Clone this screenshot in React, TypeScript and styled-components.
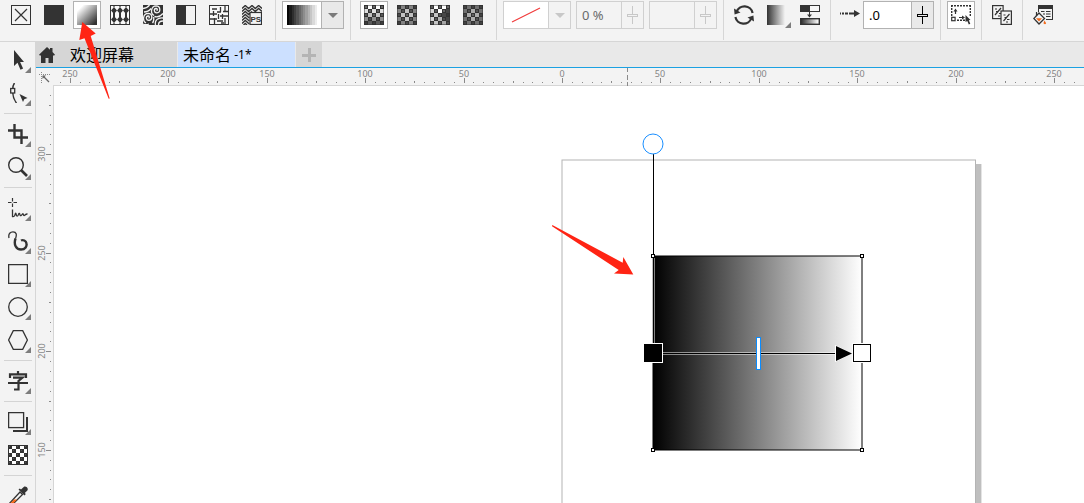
import React, { useEffect, useState } from "react";
import styled, { createGlobalStyle, css } from "styled-components";

const ink = "#333333";
const line = "#d6d6d6";
const edge = "#b2b2b2";
const uiFont = `"Noto Sans", "Noto Sans CJK SC", sans-serif`;

const Global = createGlobalStyle`
  * { box-sizing: border-box; }
  body { margin: 0; font-family: ${uiFont}; background: #f3f3f3; color: #000; }
  button, input, select { font: inherit; color: inherit; }
`;

const Shell = styled.div`
  position: relative;
  display: flex;
  flex-direction: column;
  height: 100vh;
  overflow: hidden;
  background: #f3f3f3;
`;

/* ---------- property bar ---------- */

const PropertyBar = styled.header`
  display: flex;
  flex: none;
  height: 42px;
  border-bottom: 1px solid ${line};
  overflow: hidden;
`;

const Group = styled.div<{ $start?: number; $end?: number; $gap?: number; $last?: boolean }>`
  display: flex;
  flex: none;
  align-items: flex-start;
  gap: ${(p) => p.$gap ?? 5}px;
  height: 40px;
  padding: 1px ${(p) => p.$end ?? 6}px 0 ${(p) => p.$start ?? 6}px;
  border-right: ${(p) => (p.$last ? "none" : `1px solid ${line}`)};
`;

const ToolButton = styled.button<{ $active?: boolean }>`
  position: relative;
  display: grid;
  place-items: center;
  width: 28px;
  height: 28px;
  padding: 0;
  border: 1px solid ${(p) => (p.$active ? edge : "transparent")};
  background: ${(p) => (p.$active ? "#fff" : "transparent")};
  svg { display: block; }
`;

const Field = styled.div<{ $disabled?: boolean; $white?: boolean; $wide?: boolean }>`
  display: grid;
  grid-template-columns: 1fr 22px;
  width: ${(p) => (p.$wide ? 71 : p.$white && !p.$disabled ? 62 : 68)}px;
  height: 28px;
  border: 1px solid ${(p) => (p.$disabled ? "#d0d0d0" : edge)};
  background: ${(p) => (p.$white ? "#fff" : "#f3f3f3")};
`;

const FieldSelect = styled.select`
  grid-area: 1 / 1 / 2 / 3;
  appearance: none;
  width: 100%;
  height: 100%;
  border: 0;
  background: transparent;
  z-index: 1;
`;

const FieldPreview = styled.span`
  grid-area: 1 / 1 / 2 / 2;
  display: grid;
  place-items: center;
`;

const FieldSide = styled.span<{ $disabled?: boolean }>`
  grid-area: 1 / 2 / 2 / 3;
  display: grid;
  place-items: center;
  border-left: 1px solid ${(p) => (p.$disabled ? "#d0d0d0" : edge)};
  background: ${(p) => (p.$disabled ? "#f3f3f3" : "#e9e9e9")};
`;

const StepButton = styled.button<{ $disabled?: boolean }>`
  display: grid;
  place-items: center;
  padding: 0;
  border: 0;
  border-left: 1px solid ${(p) => (p.$disabled ? "#d0d0d0" : edge)};
  background: ${(p) => (p.$disabled ? "#f3f3f3" : "#e9e9e9")};
`;

const FieldInput = styled.input`
  width: 100%;
  min-width: 0;
  padding: 0 0 0 5px;
  border: 0;
  background: transparent;
  font-size: 13px;
  line-height: 26px;
  color: #000;
  &:disabled { color: #6a6a6a; }
`;

const DirectionIcon = styled.label`
  padding-top: 4px;
  height: 28px;
`;

/* ---------- body ---------- */

const Body = styled.div`
  display: flex;
  flex: 1;
  min-height: 0;
`;

const Toolbox = styled.nav`
  flex: none;
  width: 36px;
  padding-top: 2px;
  border-right: 1px solid ${line};
  overflow: hidden;
`;

const Tool = styled.button`
  position: relative;
  display: flex;
  justify-content: center;
  align-items: flex-start;
  width: 35px;
  height: 33px;
  padding: 6px 0 0 1px;
  border: 0;
  background: transparent;
  svg { display: block; }
`;

const Flyout = styled.i<{ $bar?: boolean }>`
  position: absolute;
  right: ${(p) => (p.$bar ? -1 : 4)}px;
  bottom: ${(p) => (p.$bar ? 0 : 4)}px;
  border-left: 6px solid transparent;
  border-bottom: 6px solid #7d7d7d;
`;

const ToolRule = styled.hr`
  height: 1px;
  margin: 3px 3px 4px 4px;
  border: 0;
  background: #d4d4d4;
`;

const Workspace = styled.main`
  display: flex;
  flex-direction: column;
  flex: 1;
  min-width: 0;
`;

const Tabs = styled.div`
  display: flex;
  flex: none;
  gap: 1px;
  height: 26px;
  background: #e9e9e9;
  border-bottom: 1px solid #1ba1e2;
`;

const Tab = styled.button<{ $active?: boolean }>`
  display: flex;
  align-items: center;
  padding: 0 43px 0 3px;
  border: 0;
  background: #d6d6d6;
  font-size: 16px;
  line-height: 24px;
  color: #000;
  white-space: pre;
  svg { flex: none; margin-right: 15px; }
  ${(p) =>
    p.$active &&
    css`
      padding-left: 5px;
      background: #cce0ff;
    `}
  small { font-size: 12px; }
`;

const AddTab = styled.button`
  display: grid;
  place-items: center;
  width: 26px;
  padding: 0;
  border: 0;
  background: #d6d6d6;
`;

const RulerRow = styled.div`
  display: flex;
  flex: none;
  height: 18px;
`;

const RulerCorner = styled.div`
  display: grid;
  place-items: center;
  flex: none;
  width: 17px;
`;

const HRuler = styled.div`
  flex: 1;
  min-width: 0;
  overflow: hidden;
  svg { display: block; }
`;

const Stage = styled.div`
  display: flex;
  flex: 1;
  min-height: 0;
`;

const VRuler = styled.div`
  flex: none;
  width: 18px;
  overflow: hidden;
  border-right: 1px solid ${line};
  svg { display: block; }
`;

const Canvas = styled.div`
  flex: 1;
  min-width: 0;
  overflow: hidden;
  background: #fff;
  svg { display: block; }
`;

const Annotations = styled.svg`
  position: absolute;
  inset: 0;
  pointer-events: none;
`;

/* ---------- icon helpers ---------- */

const Icon = ({ children, crisp }: { children: React.ReactNode; crisp?: boolean }) => (
  <svg
    width="20"
    height="20"
    viewBox="0 0 20 20"
    fill="none"
    stroke="none"
    shapeRendering={crisp ? "crispEdges" : undefined}
    aria-hidden="true"
  >
    {children}
  </svg>
);

const Frame = ({ fill = "none" }: { fill?: string }) => (
  <rect x="0.5" y="0.5" width="19" height="19" fill={fill} stroke={ink} />
);

const Checker = ({ shade }: { shade: (c: number, r: number) => number }) => (
  <Icon crisp>
    <rect width="20" height="20" fill={ink} />
    {Array.from({ length: 25 }, (_, i) => {
      const c = i % 5;
      const r = Math.floor(i / 5);
      const lit = (c + r) % 2 === 1;
      return (
        <rect
          key={i}
          x={c * 4 + (lit ? 0 : 1)}
          y={r * 4 + (lit ? 0 : 1)}
          width={lit ? 4 : 2}
          height={lit ? 4 : 2}
          fill="#fff"
          opacity={shade(c, r) * (lit ? 1 : 0.25)}
        />
      );
    })}
    <path d="M0 0h20v20H0zM1 1v18h18V1z" fillRule="evenodd" fill={ink} opacity="0.5" />
  </Icon>
);

const Spiral = ({ x, y }: { x: number; y: number }) => (
  <path
    transform={`translate(${x} ${y})`}
    d="M0 .5c1.300-.2 1-2.200-.6-2c-2.400.4-2 4.500 1 4.400c4-.3 4-6.800-.8-7C-5.500-4-6.500 3.500-2.500 5.500"
    stroke="#f3f3f3"
    strokeWidth="1.300"
  />
);

const Stepper = ({ color }: { color: string }) => (
  <svg width="11" height="18" viewBox="0 0 11 18" fill="none" aria-hidden="true" shapeRendering="crispEdges">
    <path d="M5.500 0v8M5.500 11v7" stroke={color} />
    <rect x="0.500" y="8.500" width="10" height="2" stroke={color} />
  </svg>
);

const Caret = ({ color }: { color: string }) => (
  <svg width="10" height="5" viewBox="0 0 10 5" aria-hidden="true">
    <path d="M0 0h10L5 5z" fill={color} />
  </svg>
);

const fillIcons: { name: string; active?: boolean; icon: React.ReactNode }[] = [
  { name: "无填充", icon: <Icon><Frame /><path d="M4 4l12 12M16 4L4 16" stroke={ink} strokeWidth="1.2" /></Icon> },
  { name: "均匀填充", icon: <Icon crisp><rect width="20" height="20" fill={ink} /></Icon> },
  {
    name: "渐变填充",
    active: true,
    icon: (
      <Icon>
        <defs>
          <linearGradient id="diag" x1="0" y1="0" x2="1" y2="1">
            <stop offset="0.15" stopColor="#fff" />
            <stop offset="0.9" stopColor={ink} />
          </linearGradient>
        </defs>
        <rect width="20" height="20" fill="url(#diag)" />
      </Icon>
    ),
  },
  {
    name: "向量图样填充",
    icon: (
      <Icon>
        <Frame fill="#f8f8f8" />
        {[4, 10, 16].map((x) => (
          <g key={x} fill={ink}>
            <path d={`M${x} 2l3 3.500-3 3.500-3-3.500zM${x} 11l3 3.500-3 3.500-3-3.500z`} />
            <path d={`M${x - 1.500} 0h3L${x} 2.500zM${x - 1.500} 20h3L${x} 17.500zM${x - 1} 8h2v4h-2z`} />
          </g>
        ))}
      </Icon>
    ),
  },
  {
    name: "位图图样填充",
    icon: (
      <Icon>
        <rect width="20" height="20" fill={ink} />
        <Spiral x={13.5} y={5} />
        <Spiral x={5.5} y={12.5} />
        <path
          d="M0 3.500c3-.3 5-1.500 6.500-3.500M1 7c3 0 5-1 7-3.500M12.500 20c-1-4.500 2-7.500 7.500-7M15.500 20c0-2.500 1.500-4 4.500-4M11.500 11.500c3 .8 6.500-.5 8.500-3M9.500 18c1.500-2 1.500-4 1-6M0 19c2 .8 4 .8 6 0"
          stroke="#f3f3f3"
          strokeWidth="1.300"
        />
      </Icon>
    ),
  },
  { name: "双色图样填充", icon: <Icon crisp><Frame fill="#f3f3f3" /><rect width="10" height="20" fill={ink} /></Icon> },
  {
    name: "底纹填充",
    icon: (
      <Icon>
        <Frame fill="#f8f8f8" />
        <path
          d="M3 4h5M11.500 2v5M16 1v5M14 6.500h5M4.500 6v5M1 9h7M8 7h4M9.500 9v5M13.500 9v5M11 11h8M5.500 13v6M1 14h7M8 16h6M16 13v6M12 18h3"
          stroke={ink}
          strokeWidth="1.300"
        />
      </Icon>
    ),
  },
  {
    name: "PostScript 填充",
    icon: (
      <Icon>
        <path
          d="M0 3.500l3.300-3 3.300 3 3.400-3 3.300 3 3.300-3 3.400 3M0 6.500l3.300-3 3.300 3 3.400-3 3.300 3 3.300-3 3.400 3M0 9.500l3.300-3 3.300 3 3.400-3M0 12.500l3.300-3 4 3.500M0 15.500l3.300-3 4 3.500M0 18.500l3.300-3 4 3.500M1.500 20l1.800-1.500L5 20"
          stroke={ink}
          strokeWidth="1.400"
        />
        <rect x="8" y="7.500" width="11.500" height="12" fill="#f3f3f3" stroke={ink} strokeWidth="1.200" />
        <text x="13.800" y="17" textAnchor="middle" fontFamily="Liberation Sans, sans-serif" fontWeight="700" fontSize="8" fill={ink}>
          PS
        </text>
      </Icon>
    ),
  },
];

const fountainIcons = [
  { name: "线性渐变填充", active: true, shade: (_c: number, r: number) => [1, 0.85, 0.7, 0.45, 0.2][r] },
  { name: "椭圆形渐变填充", shade: (c: number, r: number) => Math.max(0.12, 0.95 - Math.hypot(c - 2, r - 2) * 0.25) },
  { name: "圆锥形渐变填充", shade: (c: number, r: number) => (c > r ? (c + r < 5 ? 1 : 0.1) : 0.8 - c * 0.08) },
  { name: "矩形渐变填充", shade: (c: number, r: number) => 0.9 - Math.max(Math.abs(c - 2), Math.abs(r - 2)) * 0.3 },
];

/* ---------- toolbox ---------- */

type ToolItem = { name: string; flyout?: boolean; icon: React.ReactNode } | "rule";

const tools: ToolItem[] = [
  { name: "选择工具", flyout: true, icon: <Icon><path d="M6 0v16l3.500-3.200 3 7 2.600-1.200-3-6.600H16z" fill={ink} /></Icon> },
  {
    name: "形状工具",
    flyout: true,
    icon: (
      <Icon>
        <path d="M6.500 0C5 2 4.800 4 4.800 6M4.800 10c.2 4 1.200 7 3.700 10" stroke={ink} strokeWidth="1.500" />
        <rect x="2.700" y="5.500" width="4" height="4.500" fill="#f3f3f3" stroke={ink} strokeWidth="1.300" />
        <path d="M11.500 11l8 4-3.200 1.200L15 19z" fill={ink} />
      </Icon>
    ),
  },
  "rule",
  {
    name: "裁剪工具",
    flyout: true,
    icon: <Icon><path d="M0 6.500h13.500V20M6.500 0v13.500H20" stroke={ink} strokeWidth="2.400" /></Icon>,
  },
  {
    name: "缩放工具",
    flyout: true,
    icon: <Icon><circle cx="8" cy="8" r="7.300" stroke={ink} strokeWidth="1.400" /><path d="M13 13l6 6" stroke={ink} strokeWidth="2.600" /></Icon>,
  },
  "rule",
  {
    name: "手绘工具",
    flyout: true,
    icon: (
      <Icon>
        <path d="M4.500 0v3.500M4.500 5.500V9M0 4.500h3.500M5.500 4.500H9" stroke={ink} strokeWidth="1.200" />
        <path
          d="M4.500 11.500v7c1.500.3 2.300-.6 2.600-2.200s.9-1.500 1.100 0 .4 1.800 1.100 1.800 1-.9 1.300-2 1-1 1.200 0 .4 1.700 1.200 1.500.9-1.500 1.700-1.800.5 2.200 1.700 1.700 1-1.700 3.100-1.500"
          stroke={ink}
          strokeWidth="1.300"
        />
      </Icon>
    ),
  },
  {
    name: "B 样条工具",
    flyout: true,
    icon: (
      <Icon>
        <path d="M1 7C0 2.500 2.500.8 5 .8c3.500 0 4 3 2.500 7" stroke={ink} strokeWidth="1.300" />
        <path d="M7.500 7.500C5.500 13.500 8 18.500 13 18.500c4.500 0 6-3.500 5.500-6-.5-3-3.500-4-5.500-3" stroke={ink} strokeWidth="2.400" />
      </Icon>
    ),
  },
  { name: "矩形工具", flyout: true, icon: <Icon><rect x="0.600" y="0.600" width="18.800" height="18.800" stroke={ink} strokeWidth="1.300" /></Icon> },
  { name: "椭圆形工具", flyout: true, icon: <Icon><circle cx="10" cy="10" r="9.300" stroke={ink} strokeWidth="1.300" /></Icon> },
  { name: "多边形工具", flyout: true, icon: <Icon><path d="M5.300.7h9.400L19.400 10l-4.700 9.300H5.300L.6 10z" stroke={ink} strokeWidth="1.300" /></Icon> },
  "rule",
  {
    name: "文本工具",
    flyout: true,
    icon: (
      <Icon>
        <path d="M10 0v3M2 7V3.300h16V7M5 6.700h9.500L10.500 10v8.500H6M0 12h20" stroke={ink} strokeWidth="2.200" />
      </Icon>
    ),
  },
  "rule",
  {
    name: "阴影工具",
    flyout: true,
    icon: (
      <Icon>
        <path d="M18 5h2v15H5v-2h13z" fill={ink} />
        <rect x="0.600" y="0.600" width="15" height="15" fill="#f3f3f3" stroke={ink} strokeWidth="1.300" />
      </Icon>
    ),
  },
  {
    name: "透明度工具",
    icon: (
      <Icon crisp>
        <rect width="20" height="20" fill={ink} />
        {Array.from({ length: 25 }, (_, i) => {
          const c = i % 5;
          const r = Math.floor(i / 5);
          return (c + r) % 2 === 1 ? (
            <rect key={i} x={c === 0 ? 1 : c * 4} y={r === 0 ? 1 : r * 4} width={c % 4 ? 4 : 3} height={r % 4 ? 4 : 3} fill="#fff" />
          ) : (
            <rect key={i} x={c * 4 + 1} y={r * 4 + 1} width="1" height="1" fill="#555" />
          );
        })}
      </Icon>
    ),
  },
  "rule",
  {
    name: "颜色滴管工具",
    icon: (
      <Icon>
        <path d="M0 19L12 6l2.500 2.500L3 20z" fill="#f3f3f3" stroke={ink} strokeWidth="1.300" />
        <path d="M1 18.500L6 13.500h3L3 20z" fill="#f26a1b" />
        <path d="M10.500 3.500l6 6 1.300-1.500-1-1 2.600-2.500c1.500-2-1.600-5-3.700-3.500L13 3.500l-1.200-1z" fill={ink} />
      </Icon>
    ),
  },
];

/* ---------- rulers ---------- */

const H_ORIGIN = 509;
const H_STEP = 98.45;
const V_FIRST = 68;
const V_STEP = 98.6;

function useWindowSize() {
  const read = () => ({ width: window.innerWidth, height: window.innerHeight });
  const [size, setSize] = useState(read);
  useEffect(() => {
    const update = () => setSize(read());
    window.addEventListener("resize", update);
    return () => window.removeEventListener("resize", update);
  }, []);
  return size;
}

const HorizontalRuler = ({ length }: { length: number }) => {
  const ticks = Array.from({ length: 400 }, (_, i) => i - 51)
    .map((n) => ({ n, x: Math.round(H_ORIGIN + (n * H_STEP) / 10) }))
    .filter((t) => t.x >= 0 && t.x < length);
  return (
    <svg width="100%" height="18" aria-label="水平标尺" role="img">
      <g shapeRendering="crispEdges" fill="#8a8a8a">
        {ticks.map(({ n, x }) => {
          const h = n % 10 === 0 ? 5 : n % 5 === 0 ? 2 : 1;
          return <rect key={n} x={x} y={h === 5 ? 10 : h === 2 ? 13 : 14} width="1" height={h} />;
        })}
        <rect x="0" y="17" width="100%" height="1" fill={line} />
        <path d="M574 0h1v4h-1zM574 7h1v5h-1zM574 14h1v4h-1z" />
      </g>
      <g fontFamily={uiFont} fontSize="9" fill="#858585" textAnchor="middle">
        {ticks
          .filter(({ n, x }) => n % 10 === 0 && x > 9 && x < length - 9)
          .map(({ n, x }) => (
            <text key={n} x={x} y="9">{Math.abs(n * 5)}</text>
          ))}
      </g>
    </svg>
  );
};

const VerticalRuler = ({ length }: { length: number }) => {
  const ticks = Array.from({ length: 300 }, (_, i) => i - 6)
    .map((n) => ({ n, y: Math.round(V_FIRST + (n * V_STEP) / 10) }))
    .filter((t) => t.y >= 0 && t.y < length);
  return (
    <svg width="17" height={length} aria-label="垂直标尺" role="img">
      <g shapeRendering="crispEdges" fill="#8a8a8a">
        {ticks.map(({ n, y }) => {
          const w = n % 10 === 0 ? 5 : n % 5 === 0 ? 2 : 1;
          return <rect key={n} x={w === 5 ? 10 : w === 2 ? 13 : 14} y={y} width={w} height="1" />;
        })}
      </g>
      <g fontFamily={uiFont} fontSize="9" fill="#858585" textAnchor="middle">
        {ticks
          .filter(({ n, y }) => n % 10 === 0 && y > 9 && y < length - 9)
          .map(({ n, y }) => (
            <text key={n} transform={`translate(9 ${y}) rotate(-90)`}>{Math.abs(300 - n * 5)}</text>
          ))}
      </g>
    </svg>
  );
};

/* ---------- drawing ---------- */

const Drawing = () => (
  <svg width="1030" height="1000" viewBox="54 86 1030 1000" role="img" aria-label="绘图页面">
    <defs>
      <linearGradient id="fountain">
        <stop offset="0" stopColor="#000" />
        <stop offset="1" stopColor="#fff" />
      </linearGradient>
    </defs>
    <rect x="976" y="164" width="5" height="600" fill="#bfbfbf" />
    <rect x="981" y="164" width="1" height="600" fill="#e4e4e4" />
    <rect x="562" y="160" width="413.500" height="600" fill="#fff" stroke="#b4b4b4" />
    <rect x="653" y="256" width="209" height="194" fill="url(#fountain)" stroke="#000" />
    <rect x="652" y="256" width="3" height="88" fill="#fff" opacity="0.5" />
    <rect x="653" y="154" width="1" height="191" fill="#000" />
    <rect x="662" y="352" width="174" height="3" fill="#fff" opacity="0.5" />
    <rect x="662" y="353" width="174" height="1" fill="#000" />
    {[[653, 256], [862, 256], [653, 450], [862, 450]].map(([x, y]) => (
      <rect key={`${x}-${y}`} x={x - 1.5} y={y - 1.5} width="3" height="3" fill="#fff" stroke="#000" />
    ))}
    <path d="M835 345L853 353.500L835 362z" fill="#fff" />
    <path d="M836 346L852 353.500L836 361z" fill="#000" />
    <rect x="643" y="343" width="20" height="20" fill="#fff" />
    <rect x="644" y="344" width="18" height="18" fill="#000" />
    <rect x="852" y="343" width="20" height="20" fill="#fff" />
    <rect x="853.500" y="344.500" width="17" height="17" fill="#fff" stroke="#000" />
    <rect x="756.500" y="337.500" width="4" height="32" fill="#fff" stroke="#0a8cff" />
    <circle cx="653" cy="144" r="10" fill="#fff" stroke="#1a8fff" />
  </svg>
);

export default function App() {
  const { width, height } = useWindowSize();
  return (
    <Shell>
      <Global />
      <PropertyBar>
        <Group $start={7} $end={9}>
          {fillIcons.map((f) => (
            <ToolButton key={f.name} $active={f.active} aria-label={f.name}>{f.icon}</ToolButton>
          ))}
        </Group>
        <Group>
          <Field $white>
            <FieldPreview>
              <svg width="30" height="20" aria-hidden="true" shapeRendering="crispEdges">
                {Array.from({ length: 13 }, (_, i) => {
                  const v = Math.round(8 + i * 19);
                  return <rect key={i} x={Math.round(i * 2.3)} width="3" height="20" fill={`rgb(${v},${v},${v})`} />;
                })}
              </svg>
            </FieldPreview>
            <FieldSide><Caret color="#7a7a7a" /></FieldSide>
            <FieldSelect aria-label="填充挑选器"><option aria-label="黑白线性" /></FieldSelect>
          </Field>
        </Group>
        <Group $start={9} $end={9}>
          {fountainIcons.map((f) => (
            <ToolButton key={f.name} $active={f.active} aria-label={f.name}><Checker shade={f.shade} /></ToolButton>
          ))}
        </Group>
        <Group>
          <Field $white $disabled>
            <FieldPreview>
              <svg width="30" height="16" viewBox="0 0 30 16" aria-hidden="true">
                <path d="M1 15L29 1" stroke="#f03a3a" strokeWidth="1.200" />
              </svg>
            </FieldPreview>
            <FieldSide $disabled><Caret color="#c8c8c8" /></FieldSide>
            <FieldSelect disabled aria-label="节点颜色"><option aria-label="无" /></FieldSelect>
          </Field>
          <Field $disabled>
            <FieldInput disabled aria-label="节点透明度" defaultValue="0 %" />
            <StepButton $disabled disabled aria-label="调整透明度"><Stepper color="#c8c8c8" /></StepButton>
          </Field>
          <Field $disabled>
            <FieldInput disabled aria-label="节点位置" />
            <StepButton $disabled disabled aria-label="调整位置"><Stepper color="#c8c8c8" /></StepButton>
          </Field>
        </Group>
        <Group>
          <ToolButton aria-label="反转填充">
            <Icon>
              <path d="M2.600 7A8.300 8.300 0 0 1 18.600 8M17.400 13A8.300 8.300 0 0 1 1.400 12" stroke={ink} strokeWidth="2.200" />
              <path d="M0 3.500l.6 6 5.900-2zM20 16.500l-.6-6-5.900 2z" fill={ink} />
            </Icon>
          </ToolButton>
          <ToolButton aria-label="排列填充">
            <Icon>
              <defs>
                <linearGradient id="mirror">
                  <stop offset="0" stopColor={ink} />
                  <stop offset="0.9" stopColor="#f3f3f3" />
                </linearGradient>
              </defs>
              <rect width="20" height="20" fill="url(#mirror)" />
            </Icon>
            <Flyout $bar />
          </ToolButton>
          <ToolButton aria-label="平滑">
            <Icon>
              <defs>
                <linearGradient id="smooth">
                  <stop offset="0.050" stopColor={ink} />
                  <stop offset="0.900" stopColor="#f3f3f3" />
                </linearGradient>
              </defs>
              <rect x="0.500" y="0.500" width="19" height="6" fill="#f6f6f6" stroke={ink} />
              <rect width="10" height="7" fill={ink} />
              <path d="M9.500 7v3" stroke={ink} />
              <path d="M7 9.500h5l-2.500 3z" fill={ink} />
              <rect x="0.700" y="13.700" width="18.600" height="5.600" fill="url(#smooth)" stroke={ink} strokeWidth="1.400" />
            </Icon>
          </ToolButton>
        </Group>
        <Group $start={9} $gap={3}>
          <DirectionIcon htmlFor="acceleration" aria-label="加速">
            <Icon>
              <path d="M0 7.500h1v2H0zM2 7.500h2v2H2zM5 7.500h3v2H5zM9 7.500h6v2H9zM14 5l6 3.500-6 3.500z" fill={ink} />
            </Icon>
          </DirectionIcon>
          <Field $white $wide>
            <FieldInput id="acceleration" defaultValue=".0" />
            <StepButton aria-label="调整加速"><Stepper color="#000" /></StepButton>
          </Field>
        </Group>
        <Group>
          <ToolButton $active aria-label="自由缩放和倾斜">
            <Icon>
              <path d="M0 .7h20M.7 0v12M19.300 0v12M6 15.300h9" stroke={ink} strokeWidth="1.400" strokeDasharray="2 1" />
              <rect x="0.700" y="12.300" width="3.400" height="3.400" stroke={ink} strokeWidth="1.200" />
              <path d="M4.500 5v4M8 12.500h4" stroke={ink} strokeWidth="1.200" />
              <path d="M2.500 6.500h4l-2-3zM11 10.500v4l3-2z" fill={ink} />
              <path d="M14.500 10l5 5-1.700.3 1.500 3.400-1.500.9-1.500-3.600-1.800 1z" fill={ink} />
            </Icon>
          </ToolButton>
        </Group>
        <Group>
          <ToolButton aria-label="复制填充">
            <Icon>
              <rect x="0.600" y="0.600" width="10.500" height="13" stroke={ink} strokeWidth="1.200" />
              <path d="M3 10l6-7M3 4h2M4 6.500h2M7 8.500h2M6 11h2" stroke={ink} strokeWidth="1.200" />
              <rect x="9" y="6" width="10.400" height="13.400" fill="#f3f3f3" stroke={ink} strokeWidth="1.200" />
              <path d="M11.500 16l6-7M11.500 10h2M12.500 12.500h2M15 14.500h2.500M14 17h2" stroke={ink} strokeWidth="1.200" />
            </Icon>
          </ToolButton>
        </Group>
        <Group $last>
          <ToolButton aria-label="编辑填充">
            <Icon>
              <path d="M5 0h15v15h-7v-1h6V4H6v3H5z" fill={ink} />
              <path d="M8 6.500h3.500M13 6.500h4.500M10 9h2M13 9h4.500M13 11.500h4.500" stroke={ink} strokeWidth="1.200" />
              <path d="M6 8l5.500 5.500L6 19 .8 13.500z" fill="#f3f3f3" stroke={ink} strokeWidth="1.300" />
              <path d="M3.500 7v4" stroke={ink} strokeWidth="1.200" />
              <path d="M3 13.200h6l-3 3.300z" fill="#f26a1b" />
              <path d="M11.500 15.500l1.500 2.500c.5 1.500-2.500 1.500-2.500 0z" fill="#f26a1b" />
            </Icon>
          </ToolButton>
        </Group>
      </PropertyBar>

      <Body>
        <Toolbox aria-label="工具箱">
          {tools.map((t, i) =>
            t === "rule" ? (
              <ToolRule key={i} />
            ) : (
              <Tool key={i} aria-label={t.name}>
                {t.icon}
                {t.flyout && <Flyout />}
              </Tool>
            )
          )}
        </Toolbox>

        <Workspace>
          <Tabs>
            <Tab>
              <svg width="16" height="16" viewBox="0 0 16 16" aria-hidden="true">
                <path d="M8 0l3 2.800V1h2.500v4L16 7.700l-.8.8H14V16H9.500v-5h-3v5H2V8.500H.8L0 7.700z" fill={ink} />
              </svg>
              欢迎屏幕
            </Tab>
            <Tab $active>未命名<small> -1*</small></Tab>
            <AddTab aria-label="新建文档">
              <svg width="14" height="14" viewBox="0 0 14 14" aria-hidden="true" shapeRendering="crispEdges">
                <path d="M6 0h3v6h5v3H9v5H6V9H0V6h6z" fill="#b4b4b4" />
              </svg>
            </AddTab>
          </Tabs>
          <RulerRow>
            <RulerCorner>
              <svg width="11" height="11" viewBox="0 0 11 11" fill="none" aria-hidden="true">
                <path d="M0 2.500h11M2.500 0v11" stroke="#8a8a8a" strokeDasharray="1 1" />
                <path d="M4 4l6 6" stroke="#666" strokeWidth="1.200" />
                <path d="M3.500 3.500h3.500l-3.500 3.500z" fill="#666" />
              </svg>
            </RulerCorner>
            <HRuler><HorizontalRuler length={width - 53} /></HRuler>
          </RulerRow>
          <Stage>
            <VRuler><VerticalRuler length={Math.max(0, height - 86)} /></VRuler>
            <Canvas><Drawing /></Canvas>
          </Stage>
        </Workspace>
      </Body>

      <Annotations width="100%" height="100%" aria-hidden="true">
        <path d="M82.300 22L95.700 33.500L90.700 36L109.700 98.500L108.700 98.700L84.500 38.300L79.300 40z" fill="#ff2414" />
        <path d="M552.300 225L622.700 262.700L623.300 257L633.300 274.500L614 273.500L618.700 270L552 226.200z" fill="#ff2414" />
      </Annotations>
    </Shell>
  );
}
